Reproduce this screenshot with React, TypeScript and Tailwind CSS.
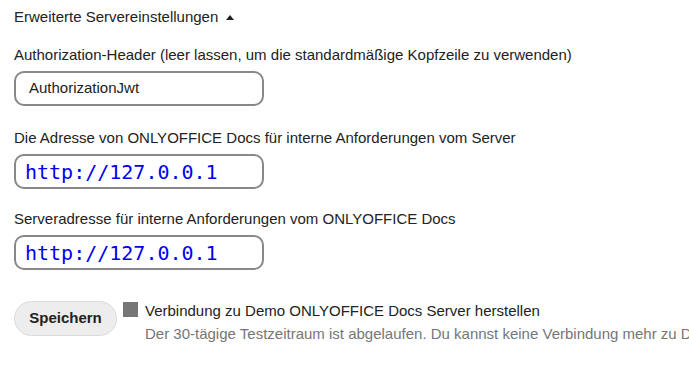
import React from "react";

export default function App() {
  return (
    <div className="w-[689px] h-[368px] overflow-hidden bg-white text-[15px] text-[#222222] pl-[14px]" style={{ fontFamily: '"Liberation Sans", Arial, sans-serif' }}>
      <div className="pt-[7px] h-[27px] leading-[20px] flex items-center">
        <span>Erweiterte Servereinstellungen</span>
        <svg width="8" height="5" viewBox="0 0 8 5" className="ml-[8px]">
          <path d="M0 5 L4 0 L8 5 Z" fill="#222222" />
        </svg>
      </div>
      <div className="mt-[18px] leading-[20px]">Authorization-Header (leer lassen, um die standardmäßige Kopfzeile zu verwenden)</div>
      <div className="mt-[6px] w-[250px] h-[35px] border-2 border-[#888888] rounded-[10px] flex items-center pl-[13px] text-[15px]">
        AuthorizationJwt
      </div>
      <div className="mt-[22px] leading-[20px]">Die Adresse von ONLYOFFICE Docs für interne Anforderungen vom Server</div>
      <div className="mt-[6px] w-[250px] h-[35px] border-2 border-[#888888] rounded-[10px] flex items-center pl-[9px] text-[20px] text-[#0000ee]" style={{ fontFamily: '"DejaVu Sans Mono", monospace' }}>
        http://127.0.0.1
      </div>
      <div className="mt-[20px] leading-[20px]">Serveradresse für interne Anforderungen vom ONLYOFFICE Docs</div>
      <div className="mt-[6px] w-[250px] h-[35px] border-2 border-[#888888] rounded-[10px] flex items-center pl-[9px] text-[20px] text-[#0000ee]" style={{ fontFamily: '"DejaVu Sans Mono", monospace' }}>
        http://127.0.0.1
      </div>
      <div className="mt-[31px] flex items-start">
        <button className="shrink-0 w-[103px] h-[35px] rounded-full bg-[#ededed] border border-[#dbdbdb] font-bold text-[15px] text-[#222222]">
          Speichern
        </button>
        <div className="ml-[6px] whitespace-nowrap">
          <div className="flex items-start h-[20px]">
            <span className="shrink-0 w-[15px] h-[15px] mt-[1px] bg-[#767676] inline-block mr-[7px]"></span>
            <span className="leading-[20px]">Verbindung zu Demo ONLYOFFICE Docs Server herstellen</span>
          </div>
          <div className="mt-[3px] pl-[22px] text-[#767676] leading-[20px]">
            Der 30-tägige Testzeitraum ist abgelaufen. Du kannst keine Verbindung mehr zu Demo ONLYOFFICE Docs Server herstellen.
          </div>
        </div>
      </div>
    </div>
  );
}
